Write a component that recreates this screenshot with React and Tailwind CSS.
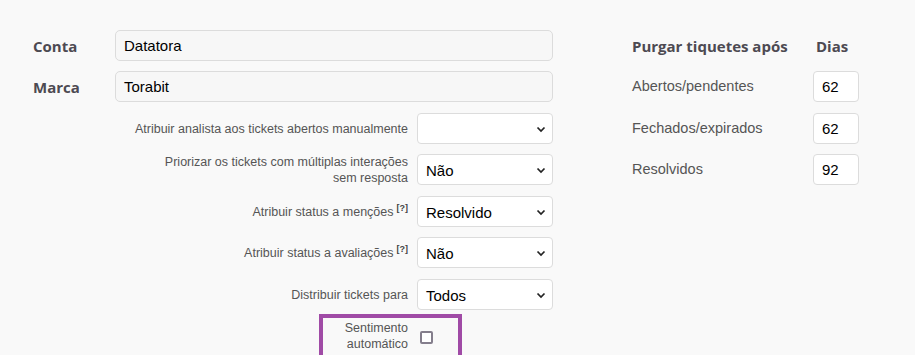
import React from "react";

const labelFont = { fontFamily: "'Open Sans', 'Noto Sans', sans-serif" };

const Chevron = () => (
  <svg
    className="pointer-events-none absolute right-[6px] top-1/2 -translate-y-1/2"
    width="10"
    height="10"
    viewBox="0 0 10 10"
    fill="none"
  >
    <path d="M1.5 3.5 L5 7 L8.5 3.5" stroke="#222" strokeWidth="1.7" />
  </svg>
);

const SelectRow = ({ label, value, help, mt, narrow }) => (
  <div className={`flex h-[31px] items-center ${mt}`}>
    <div className="w-[375px] flex justify-end">
      <span
        className={`${narrow ? "w-[250px]" : "w-[290px]"} text-right text-[12.5px] leading-[16px] text-[#555]`}
      >
        {label}
        {help && (
          <sup className="ml-[3px] text-[9px] font-bold text-[#444]">[?]</sup>
        )}
      </span>
    </div>
    <div className="relative ml-[9px] h-[31px] w-[136px] rounded-[4px] border border-[#dcdcdc] bg-white">
      <div className="flex h-full items-center pl-[8px] pt-[3px] text-[15px] text-black">{value}</div>
      <Chevron />
    </div>
  </div>
);

const TextRow = ({ label, value, mt }) => (
  <div className={`flex items-center ${mt}`}>
    <div className="w-[82px] pt-[2px] text-[15px] font-bold text-[#4d4a52]" style={labelFont}>
      {label}
    </div>
    <div className="flex h-[31px] w-[438px] items-center rounded-[5px] border border-[#dcdcdc] bg-[#f7f7f7] pl-[8px] pt-[2px] text-[15px] text-black">
      {value}
    </div>
  </div>
);

const DaysRow = ({ label, value, mt }) => (
  <div className={`flex items-center ${mt}`}>
    <div className="w-[181px] pt-[1px] text-[14.5px] text-[#555]">{label}</div>
    <div className="flex h-[31px] w-[46px] items-center rounded-[4px] border border-[#dcdcdc] bg-white pl-[8px] pt-[2px] text-[15px] text-black">
      {value}
    </div>
  </div>
);

export default function App() {
  return (
    <div
      className="h-[355px] w-[915px] overflow-hidden bg-[#f9f9f9] pl-[33px] pt-[30px]"
      style={{ fontFamily: "Arial, 'Liberation Sans', sans-serif" }}
    >
      <div className="flex">
        <div className="flex w-[520px] flex-col">
          <TextRow label="Conta" value="Datatora" mt="" />
          <TextRow label="Marca" value="Torabit" mt="mt-[10px]" />
          <SelectRow label="Atribuir analista aos tickets abertos manualmente" value="" mt="mt-[11px]" />
          <SelectRow
            label="Priorizar os tickets com múltiplas interações sem resposta"
            value="Não"
            mt="mt-[10px]"
            narrow
          />
          <SelectRow label="Atribuir status a menções" value="Resolvido" help mt="mt-[11px]" />
          <SelectRow label="Atribuir status a avaliações" value="Não" help mt="mt-[10px]" />
          <SelectRow label="Distribuir tickets para" value="Todos" mt="mt-[11px]" />
          <div className="ml-[286px] mt-[4px] flex h-[46px] w-[143px] border-4 border-[#a04ba6] pt-[2px]">
            <div className="flex">
              <span className="w-[85px] text-right text-[12.5px] leading-[16px] text-[#555]">
                Sentimento automático
              </span>
              <span className="ml-[12px] mt-[11px] h-[13px] w-[13px] rounded-[2px] border-2 border-[#847e8c] bg-white" />
            </div>
          </div>
        </div>
        <div className="ml-[79px] flex w-[240px] flex-col">
          <div className="flex h-[31px] items-center pt-[2px] text-[15px] font-bold text-[#4d4a52]" style={labelFont}>
            <span className="w-[184px]">Purgar tiquetes após</span>
            <span>Dias</span>
          </div>
          <DaysRow label="Abertos/pendentes" value="62" mt="mt-[10px]" />
          <DaysRow label="Fechados/expirados" value="62" mt="mt-[11px]" />
          <DaysRow label="Resolvidos" value="92" mt="mt-[10px]" />
        </div>
      </div>
    </div>
  );
}
